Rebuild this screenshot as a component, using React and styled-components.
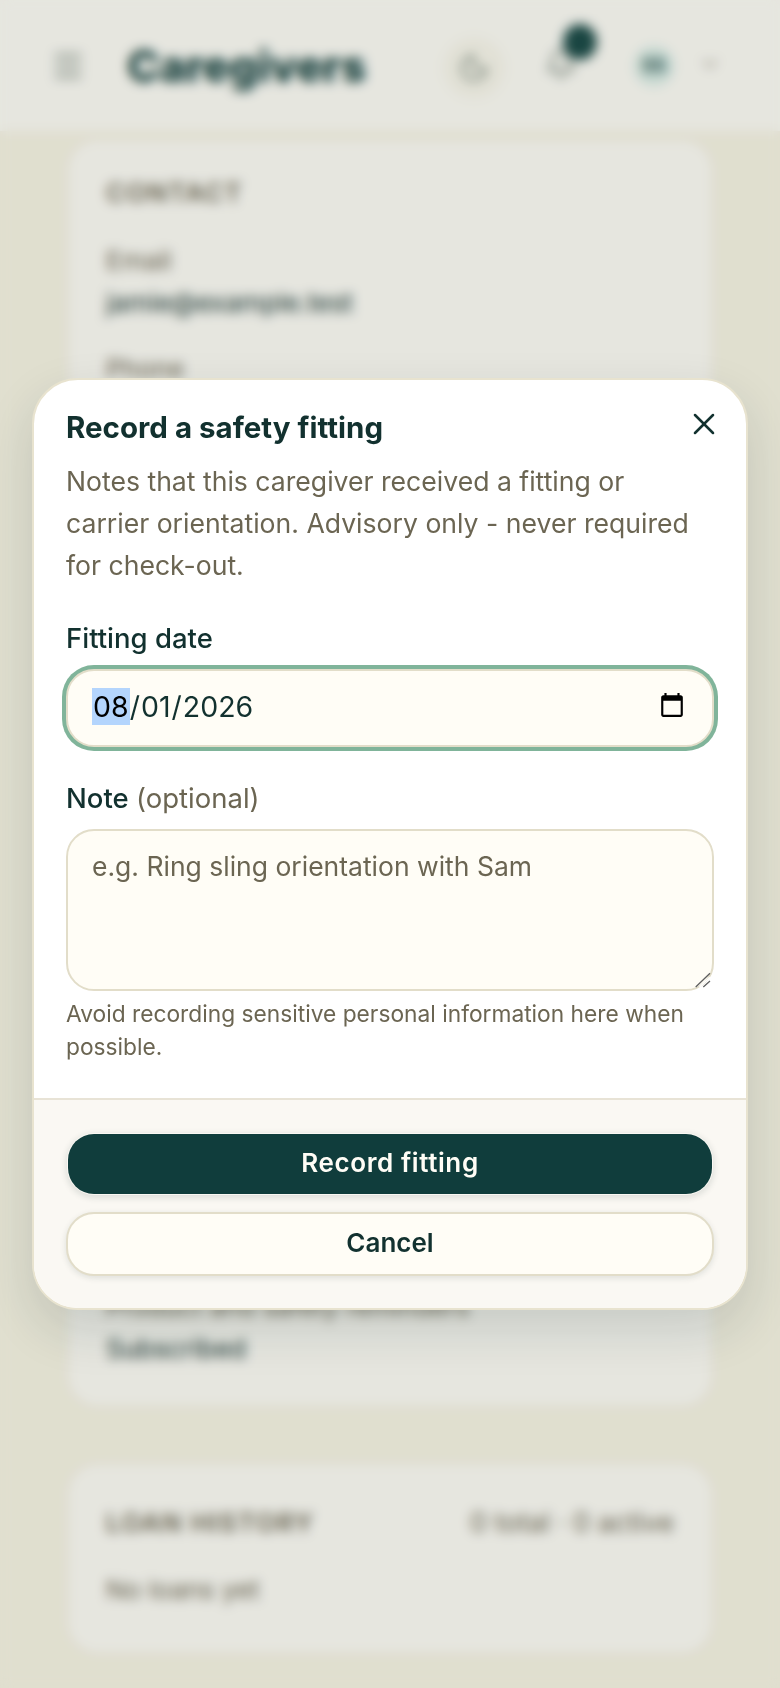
import styled, { createGlobalStyle } from "styled-components";
import { X, Menu, Moon, Bell, ChevronDown } from "lucide-react";

const GlobalStyle = createGlobalStyle`
  html, body {
    margin: 0;
    padding: 0;
    background: #f9f6e7;
  }
  * {
    box-sizing: border-box;
  }
  body {
    font-family: Inter, "Noto Sans", sans-serif;
    color: #12312f;
  }
`;

const Page = styled.div`
  height: 1688px;
  overflow: hidden;
`;

const TopBar = styled.header`
  height: 131px;
  display: flex;
  align-items: center;
  padding: 0 58px 0 50px;
  background: #fffef9;
  color: #0f3d3c;
`;

const PageTitle = styled.h1`
  margin: 0 0 0 41px;
  flex: 1;
  font-size: 44px;
  font-weight: 800;
`;

const RoundIcon = styled.span`
  width: 64px;
  height: 64px;
  display: flex;
  align-items: center;
  justify-content: center;
  border-radius: 50%;
  background: #fbf9ef;
  color: #7d8a80;
  transform: translateY(2px);
`;

const BellWrap = styled.span`
  position: relative;
  margin-left: 39px;
  color: #7d8a80;
`;

const BellBadge = styled.span`
  position: absolute;
  top: -24px;
  left: 18px;
  width: 34px;
  height: 36px;
  border-radius: 50%;
  background: #1a4a48;
`;

const Avatar = styled.span`
  width: 40px;
  height: 40px;
  margin-left: 57px;
  display: flex;
  align-items: center;
  justify-content: center;
  border-radius: 50%;
  background: #dcefe9;
  font-size: 18px;
  font-weight: 600;
`;

const Caret = styled.span`
  margin-left: 24px;
  color: #a59f90;
`;

const CardColumn = styled.main`
  display: flex;
  flex-direction: column;
  gap: 54px;
  padding: 7px 66px 0;
`;

const Card = styled.section`
  height: ${({ $height }) => $height}px;
  padding: ${({ $top }) => $top}px 38px 0;
  border: 2px solid #f3efdf;
  border-radius: 32px;
  background: #fffef9;
`;

const CardHead = styled.div`
  display: flex;
  justify-content: space-between;
  align-items: center;
`;

const CardTitle = styled.div`
  font-size: 26px;
  font-weight: 600;
  letter-spacing: 1.3px;
  color: #6b6552;
`;

const CardMeta = styled.div`
  font-size: 27px;
  color: #6b6552;
`;

const Field = styled.div`
  margin-top: ${({ $gap }) => $gap}px;
  font-size: 26px;
  line-height: 42px;
  color: ${({ $strong }) => ($strong ? "#12312f" : "#6b6552")};
`;

const Overlay = styled.div`
  position: fixed;
  inset: 0;
  display: flex;
  align-items: center;
  justify-content: center;
  background: rgba(30, 33, 20, 0.11);
  backdrop-filter: blur(6px);
`;

const Modal = styled.div`
  width: 716px;
  display: flex;
  flex-direction: column;
  overflow: hidden;
  border: 2px solid #e8e3cf;
  border-radius: 46px;
  background: #fff;
  box-shadow: 0 20px 50px rgba(15, 40, 40, 0.14);
`;

const ModalBody = styled.div`
  padding: 26px 32px 35px;
`;

const ModalHead = styled.div`
  display: flex;
  justify-content: space-between;
  align-items: flex-start;
`;

const ModalTitle = styled.h2`
  margin: 0;
  font-size: 29.5px;
  line-height: 42px;
  font-weight: 700;
  color: #12312f;
`;

const CloseButton = styled.button`
  width: 36px;
  height: 36px;
  margin: 0 -8px 0 0;
  padding: 0;
  display: flex;
  border: 0;
  background: none;
  color: #12312f;
`;

const Description = styled.p`
  margin: 12px 0 0;
  padding-right: 8px;
  font-size: 26.6px;
  line-height: 42px;
  color: #6b6552;
`;

const FieldLabel = styled.label`
  display: block;
  margin-top: ${({ $gap }) => $gap}px;
  font-size: 27.5px;
  line-height: 36px;
  font-weight: 500;
  color: #12312f;
`;

const Optional = styled.span`
  font-weight: 400;
  color: #6b6552;
`;

const DateInput = styled.input`
  display: block;
  width: 648px;
  height: 78px;
  margin-top: 13px;
  padding: 0 24px 4px;
  border: 2px solid #e2ddc9;
  border-radius: 28px;
  outline: none;
  background: #fffdf6;
  box-shadow: 0 0 0 4px #80b49a;
  font: inherit;
  font-size: 28.5px;
  color: #12312f;

  &::-webkit-datetime-edit-month-field {
    background: #b4d5fd;
    color: #000;
  }
`;

const NoteWrap = styled.div`
  position: relative;
  margin-top: 13px;
`;

const NoteInput = styled.textarea`
  display: block;
  width: 648px;
  height: 162px;
  padding: 17px 24px;
  border: 2px solid #e2ddc9;
  border-radius: 28px;
  outline: none;
  background: #fffdf6;
  font: inherit;
  font-size: 26.5px;
  line-height: 36px;
  color: #12312f;
  resize: none;

  &::placeholder {
    color: #6b6552;
    opacity: 1;
  }
`;

const ResizeGrip = styled.svg`
  position: absolute;
  right: 3px;
  bottom: 3px;
  width: 17px;
  height: 16px;
  pointer-events: none;
`;

const Hint = styled.p`
  margin: 6px 0 0;
  font-size: 22.75px;
  line-height: 33px;
  color: #6b6552;
`;

const ModalFoot = styled.div`
  display: flex;
  flex-direction: column;
  gap: 16px;
  padding: 32px;
  border-top: 2px solid #e8e3d6;
  background: #faf8f3;
`;

const ActionButton = styled.button`
  width: 648px;
  height: 64px;
  padding: 0 0 4px;
  border: 2px solid ${({ $primary }) => ($primary ? "transparent" : "#e2ddc9")};
  border-radius: 28px;
  background: ${({ $primary }) => ($primary ? "#103d3c" : "#fffdf6")};
  background-clip: padding-box;
  box-shadow: 0 2px 6px rgba(15, 40, 40, 0.12);
  font: inherit;
  font-size: 26px;
  font-weight: 600;
  letter-spacing: ${({ $primary }) => ($primary ? "0.6px" : "0")};
  color: ${({ $primary }) => ($primary ? "#fffdf6" : "#12312f")};
`;

export default function App() {
  return (
    <>
      <GlobalStyle />
      <Page>
        <TopBar>
          <Menu size={36} color="#7d8a80" />
          <PageTitle>Caregivers</PageTitle>
          <RoundIcon>
            <Moon size={32} />
          </RoundIcon>
          <BellWrap>
            <Bell size={32} />
            <BellBadge />
          </BellWrap>
          <Avatar>SS</Avatar>
          <Caret>
            <ChevronDown size={24} />
          </Caret>
        </TopBar>
        <CardColumn>
          <Card $height={1270} $top={37}>
            <CardTitle>CONTACT</CardTitle>
            <Field $gap={32}>Email</Field>
            <Field $gap={0} $strong>jamie@example.test</Field>
            <Field $gap={24}>Phone</Field>
            <Field $gap={896}>Product and safety reminders</Field>
            <Field $gap={0} $strong>Subscribed</Field>
          </Card>
          <Card $height={193} $top={42}>
            <CardHead>
              <CardTitle>LOAN HISTORY</CardTitle>
              <CardMeta>0 total · 0 active</CardMeta>
            </CardHead>
            <Field $gap={30}>No loans yet</Field>
          </Card>
        </CardColumn>
      </Page>
      <Overlay>
        <Modal>
          <ModalBody>
            <ModalHead>
              <ModalTitle>Record a safety fitting</ModalTitle>
              <CloseButton aria-label="Close">
                <X size={36} strokeWidth={1.7} />
              </CloseButton>
            </ModalHead>
            <Description>
              Notes that this caregiver received a fitting or carrier orientation. Advisory only - never required for check-out.
            </Description>
            <FieldLabel $gap={34} htmlFor="fitting-date">Fitting date</FieldLabel>
            <DateInput id="fitting-date" type="date" defaultValue="2026-08-01" autoFocus />
            <FieldLabel $gap={33} htmlFor="fitting-note">
              Note <Optional>(optional)</Optional>
            </FieldLabel>
            <NoteWrap>
              <NoteInput id="fitting-note" placeholder="e.g. Ring sling orientation with Sam" />
              <ResizeGrip viewBox="0 0 17 16">
                <path d="M5.5 15L16 5.2" stroke="#fff" strokeWidth="1.5" />
                <path d="M1.7 15L16 1.3M9.3 15L16 9" stroke="#5f5f5f" strokeWidth="1.3" fill="none" />
              </ResizeGrip>
            </NoteWrap>
            <Hint>Avoid recording sensitive personal information here when possible.</Hint>
          </ModalBody>
          <ModalFoot>
            <ActionButton $primary>Record fitting</ActionButton>
            <ActionButton>Cancel</ActionButton>
          </ModalFoot>
        </Modal>
      </Overlay>
    </>
  );
}
